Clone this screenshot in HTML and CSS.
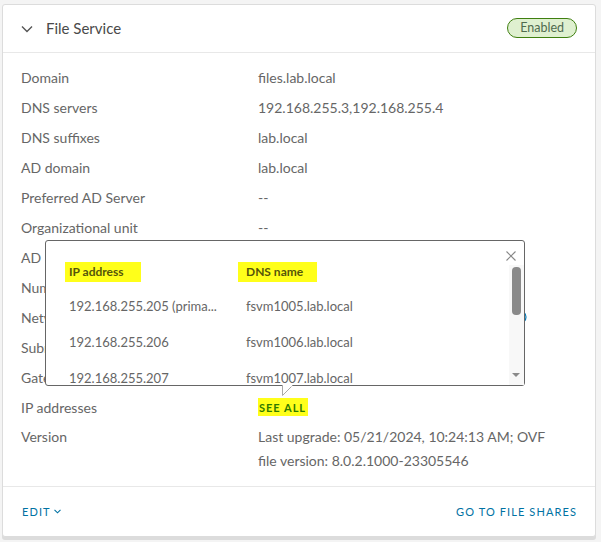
FILE: index.html
```html
<!DOCTYPE html>
<html>
<head>
<meta charset="utf-8">
<link rel="stylesheet" href="styles.css">
</head>
<body>
<div class="card">
  <div class="card-header">
    <div class="title">
      <svg class="chev" width="12" height="8" viewBox="0 0 12 8"><path d="M1 1.5 L6 6.5 L11 1.5" fill="none" stroke="#555" stroke-width="1.4"/></svg>
      <span>File Service</span>
    </div>
    <span class="badge">Enabled</span>
  </div>
  <div class="card-body">
    <div class="row"><div class="lbl">Domain</div><div class="val">files.lab.local</div></div>
    <div class="row"><div class="lbl">DNS servers</div><div class="val">192.168.255.3,192.168.255.4</div></div>
    <div class="row"><div class="lbl">DNS suffixes</div><div class="val">lab.local</div></div>
    <div class="row"><div class="lbl">AD domain</div><div class="val">lab.local</div></div>
    <div class="row"><div class="lbl">Preferred AD Server</div><div class="val">--</div></div>
    <div class="row"><div class="lbl">Organizational unit</div><div class="val">--</div></div>
    <div class="row"><div class="lbl">AD username</div><div class="val">--</div></div>
    <div class="row"><div class="lbl">Number of file server VMs</div><div class="val">3</div></div>
    <div class="row"><div class="lbl">Network</div><div class="val net"><span>VM Network</span><svg class="info" width="14" height="14" viewBox="0 0 14 14"><circle cx="7" cy="7" r="6" fill="none" stroke="#0079b8" stroke-width="1.2"/></svg></div></div>
    <div class="row"><div class="lbl">Subnet mask</div><div class="val">255.255.255.0</div></div>
    <div class="row"><div class="lbl">Gateway</div><div class="val">192.168.255.1</div></div>
    <div class="row"><div class="lbl">IP addresses</div><div class="val"><span class="seeall">SEE ALL</span></div></div>
    <div class="row tall"><div class="lbl">Version</div><div class="val">Last upgrade: 05/21/2024, 10:24:13 AM; OVF file version: 8.0.2.1000-23305546</div></div>
  </div>
  <div class="card-footer">
    <span class="link">EDIT <svg width="7" height="5" viewBox="0 0 7 5"><path d="M0.5 0.8 L3.5 3.8 L6.5 0.8" fill="none" stroke="#0072a3" stroke-width="1.1"/></svg></span>
    <span class="link">GO TO FILE SHARES</span>
  </div>

  <div class="popup">
    <svg class="close" width="10" height="10" viewBox="0 0 10 10"><path d="M0.5 0.5 L9.5 9.5 M9.5 0.5 L0.5 9.5" stroke="#888" stroke-width="1.1"/></svg>
    <div class="list">
      <div class="prow head"><div class="c1"><span class="hl">IP address</span></div><div class="c2"><span class="hl">DNS name</span></div></div>
      <div class="prow"><div class="c1">192.168.255.205 (prima...</div><div class="c2">fsvm1005.lab.local</div></div>
      <div class="prow"><div class="c1">192.168.255.206</div><div class="c2">fsvm1006.lab.local</div></div>
      <div class="prow"><div class="c1">192.168.255.207</div><div class="c2">fsvm1007.lab.local</div></div>
    </div>
    <div class="sbar"><div class="thumb"></div><div class="arrow"></div></div>
    <svg class="pointer" width="11" height="11" viewBox="0 0 11 11"><path d="M0.5 0 L0.5 10.5 L10.5 0.5" fill="#fff" stroke="#aaa" stroke-width="1"/><path d="M1 0.5 L10 0.5" stroke="#fff" stroke-width="2"/></svg>
  </div>
</div>
</body>
</html>
```
FILE: styles.css
```css
* { box-sizing: border-box; }
html, body { margin: 0; padding: 0; }
body {
  background: #f4f4f4;
  font-family: "Lato", "Noto Sans", sans-serif;
  width: 601px;
  height: 542px;
  overflow: hidden;
}
.card {
  position: relative;
  margin: 4px 0 0 2px;
  width: 594px;
  height: 533px;
  background: #fff;
  border: 1px solid #dcdcdc;
  border-radius: 3px;
  box-shadow: 0 3px 0 #dcdcdc;
  display: flex;
  flex-direction: column;
}
.card-header {
  height: 48px;
  border-bottom: 1px solid #e8e8e8;
  display: flex;
  align-items: center;
  justify-content: space-between;
  padding: 0 18px 0 18px;
}
.title {
  display: flex;
  align-items: center;
  gap: 13px;
  font-size: 15px;
  color: #4a4a4a;
  margin-top: -1px;
}
.chev { margin-top: 1px; }
.badge {
  font-size: 12.5px;
  color: #4f6b4f;
  background: #dff0d0;
  border: 1px solid #3f7f10;
  border-radius: 10px;
  height: 20px;
  line-height: 18px;
  padding: 0 12px;
  margin-top: -1px;
}
.card-body {
  padding: 9px 18px 10px 18px;
  border-bottom: 1px solid #e8e8e8;
}
.row {
  display: grid;
  grid-template-columns: 237px 1fr;
  height: 30px;
  align-items: center;
  font-size: 14px;
  color: #666;
}
.row.tall {
  height: 54px;
  align-items: start;
  line-height: 24px;
  padding-top: 3px;
}
.row.tall .val { padding-right: 20px; }
.val.net {
  display: flex;
  justify-content: flex-end;
  align-items: center;
  padding-right: 50px;
}
.val.net span { margin-right: auto; }
.seeall {
  display: inline-block;
  background: #ffff1a;
  color: #2f7a00;
  font-size: 11px;
  font-weight: 700;
  letter-spacing: 1px;
  padding: 3px 2px 2px 1px;
}
.card-footer {
  flex: 1;
  display: flex;
  align-items: center;
  justify-content: space-between;
  padding: 0 18px 0 19px;
}
.link {
  font-size: 11px;
  letter-spacing: 1.1px;
  color: #0072a3;
  display: inline-flex;
  align-items: center;
  gap: 3px;
}
.popup {
  position: absolute;
  left: 42px;
  top: 235px;
  width: 480px;
  height: 146px;
  background: #fff;
  border: 1px solid #666;
  border-radius: 3px;
}
.close { position: absolute; right: 8px; top: 10px; }
.list {
  height: 144px;
  overflow: hidden;
  padding: 14px 0 0 19px;
}
.prow {
  display: grid;
  grid-template-columns: 177px 1fr;
  height: 36px;
  align-items: center;
  font-size: 13px;
  color: #666;
}
.prow.head { height: 33px; font-size: 12px; font-weight: 700; }
.c1, .c2 { padding-left: 4px; }
.hl {
  display: inline-block;
  background: #ffff1a;
  color: #55550a;
  padding: 2px 17px 3px 4px;
  margin-left: -4px;
}
.c2 .hl { margin-left: -8px; padding-left: 8px; padding-right: 14px; }
.sbar {
  position: absolute;
  right: 0;
  top: 24px;
  width: 15px;
  height: 120px;
  background: #f8f8f8;
}
.thumb {
  position: absolute;
  left: 3px;
  top: 2px;
  width: 9px;
  height: 48px;
  background: #8a8a8a;
  border-radius: 4px;
}
.arrow {
  position: absolute;
  left: 3px;
  bottom: 8px;
  width: 0;
  height: 0;
  border-left: 4px solid transparent;
  border-right: 4px solid transparent;
  border-top: 4px solid #8a8a8a;
}
.pointer {
  position: absolute;
  left: 236px;
  bottom: -11px;
}
```
